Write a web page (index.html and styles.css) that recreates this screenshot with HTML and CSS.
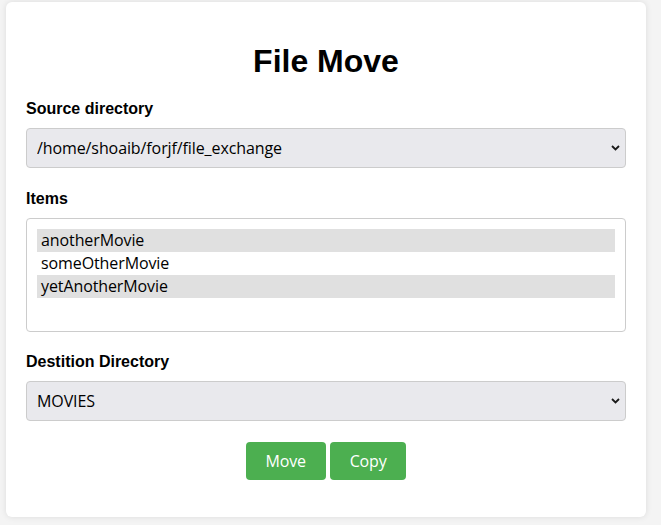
FILE: index.html
```html
<!DOCTYPE html>
<html lang="en">
<head>
<meta charset="utf-8">
<title>File Move</title>
<link rel="stylesheet" href="styles.css">
</head>
<body>
<main class="card">
  <h1 class="title">File Move</h1>
  <form class="form">
    <label class="label" for="src">Source directory</label>
    <div class="select-wrap">
      <select id="src" class="select">
        <option>/home/shoaib/forjf/file_exchange</option>
      </select>
      <svg class="chevron" width="9" height="6" viewBox="0 0 9 6"><path d="M1 1 L4.5 4.5 L8 1" fill="none" stroke="#1a1a1a" stroke-width="1.8"/></svg>
    </div>

    <label class="label">Items</label>
    <div class="listbox" role="listbox">
      <div class="option selected">anotherMovie</div>
      <div class="option">someOtherMovie</div>
      <div class="option selected">yetAnotherMovie</div>
    </div>

    <label class="label" for="dst">Destition Directory</label>
    <div class="select-wrap">
      <select id="dst" class="select">
        <option>MOVIES</option>
      </select>
      <svg class="chevron" width="9" height="6" viewBox="0 0 9 6"><path d="M1 1 L4.5 4.5 L8 1" fill="none" stroke="#1a1a1a" stroke-width="1.8"/></svg>
    </div>

    <div class="actions">
      <button type="button" class="btn">Move</button>
      <button type="button" class="btn">Copy</button>
    </div>
  </form>
</main>
</body>
</html>
```
FILE: styles.css
```css
html, body {
  margin: 0;
  padding: 0;
}
body {
  background: #f4f4f4;
  font-family: "Liberation Sans", Arial, sans-serif;
  color: #000;
  padding: 2px 15px 8px 6px;
}
.card {
  width: 600px;
  background: #fff;
  border-radius: 6px;
  box-shadow: 0 0 6px rgba(0,0,0,0.1);
  padding: 20px 20px 37px 20px;
}
.title {
  font-size: 32px;
  font-weight: bold;
  text-align: center;
  line-height: 37px;
  margin: 21px 0 19px;
}
.form {
  display: flex;
  flex-direction: column;
}
.label {
  display: block;
  font-size: 16px;
  font-weight: bold;
  line-height: 18px;
  padding-top: 1px;
  margin-bottom: 10px;
}
.select-wrap {
  position: relative;
  margin-bottom: 21px;
}
.select {
  appearance: none;
  -webkit-appearance: none;
  width: 100%;
  height: 40px;
  box-sizing: border-box;
  padding: 0 30px 0 10px;
  background: #e9e9ed;
  border: 1px solid #cccccc;
  border-radius: 4px;
  font-family: "Open Sans", "DejaVu Sans", sans-serif;
  font-size: 16px;
  letter-spacing: -0.1px;
  color: #000;
}
.chevron {
  position: absolute;
  right: 6px;
  top: 17px;
}
.listbox {
  box-sizing: border-box;
  height: 114px;
  border: 1px solid #cccccc;
  border-radius: 4px;
  padding: 10px;
  margin-bottom: 20px;
  font-family: "Open Sans", "DejaVu Sans", sans-serif;
  font-size: 16px;
  letter-spacing: -0.1px;
}
.option {
  height: 23px;
  line-height: 23px;
  padding-left: 4px;
}
.option.selected {
  background: #e0e0e0;
}
.actions {
  display: flex;
  justify-content: center;
  gap: 4px;
}
.btn {
  background: #4caf50;
  color: #fff;
  border: none;
  border-radius: 4px;
  height: 38px;
  padding: 0 20px;
  font-family: "Open Sans", "DejaVu Sans", sans-serif;
  font-size: 16px;
  letter-spacing: -0.2px;
  cursor: pointer;
}
```
